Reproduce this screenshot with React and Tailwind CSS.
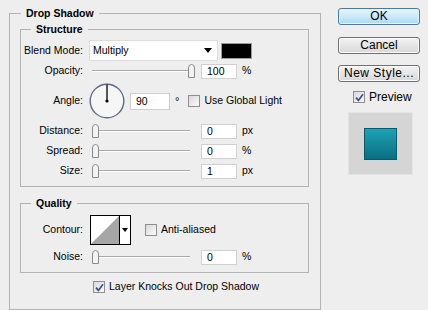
import React from "react";

const Check = ({ checked }) => (
  <div className="w-[12px] h-[12px] border border-[#8f8f8f] bg-gradient-to-br from-[#d9d9d9] to-[#fbfbfb] flex items-center justify-center shrink-0">
    {checked && (
      <svg width="9" height="9" viewBox="0 0 9 9">
        <path d="M1 4.6 L3.4 7.4 L8 1.2" stroke="#3b4e8e" strokeWidth="1.7" fill="none" />
      </svg>
    )}
  </div>
);

const Slider = ({ pos }) => (
  <div className="relative w-[104px] h-[16px] shrink-0">
    <div className="absolute left-[3px] right-[3px] top-[7px] h-[1px] bg-[#a8a8a8]" />
    <div className="absolute left-[3px] right-[3px] top-[8px] h-[1px] bg-white" />
    <svg className="absolute top-[1px]" style={{ left: pos }} width="7" height="14" viewBox="0 0 7 14">
      <path d="M0.5 13.5 V4 Q0.5 0.5 3.5 0.5 Q6.5 0.5 6.5 4 V13.5 Z" fill="#f3f3f3" stroke="#8b8b8b" />
    </svg>
  </div>
);

const Input = ({ value, w = "w-[36px]" }) => (
  <div className={`${w} h-[15px] bg-white border border-[#d0d0d0] pl-[5px] leading-[13px] shrink-0`}>{value}</div>
);

const Label = ({ children }) => <span className="w-[62px] text-right shrink-0">{children}</span>;

const SliderRow = ({ label, pos, value, unit }) => (
  <div className="flex items-center h-[20px]">
    <Label>{label}</Label>
    <div className="ml-[6px]">
      <Slider pos={pos} />
    </div>
    <div className="ml-[8px]">
      <Input value={value} />
    </div>
    <span className="ml-[5px]">{unit}</span>
  </div>
);

export default function App() {
  return (
    <div className="w-[428px] h-[310px] overflow-hidden bg-[#eeeeee] flex font-['Liberation_Sans',Arial,sans-serif] text-[10.5px] text-black">
      <fieldset className="ml-[9px] mt-[6px] w-[312px] border border-[#b3b3b3] pb-[20px] shrink-0">
        <legend className="ml-[11px] px-[5px] font-bold leading-[14px] h-[14px]">Drop Shadow</legend>

        <fieldset className="ml-[10px] mt-[2px] w-[289px] border border-[#b3b3b3] pt-[4px] pb-[5px]">
          <legend className="ml-[10px] px-[5px] font-bold leading-[14px] h-[14px]">Structure</legend>

          <div className="flex items-center h-[21px]">
            <Label>Blend Mode:</Label>
            <div className="ml-[6px] w-[129px] h-[21px] bg-white border border-[#dcdcdc] flex items-center pl-[3px] pr-[5px]">
              <span className="flex-1">Multiply</span>
              <svg width="8" height="5" viewBox="0 0 8 5">
                <path d="M0 0 H8 L4 5 Z" fill="#000" />
              </svg>
            </div>
            <div className="ml-[3px] w-[31px] h-[16px] bg-black border border-[#9a9a9a]" />
          </div>

          <SliderRow label="Opacity:" pos={99} value="100" unit="%" />

          <div className="flex items-center h-[40px]">
            <Label>Angle:</Label>
            <svg className="ml-[6px] shrink-0" width="36" height="36" viewBox="0 0 36 36">
              <circle cx="18" cy="18" r="16.8" fill="#f6f6f6" stroke="#5b6b86" strokeWidth="1.4" />
              <line x1="18" y1="18" x2="18" y2="1.5" stroke="#000" strokeWidth="1.3" />
              <circle cx="18" cy="18" r="1.6" fill="#000" />
            </svg>
            <div className="ml-[5px]">
              <div className="w-[40px] h-[17px] bg-white border border-[#d0d0d0] pl-[5px] leading-[15px]">90</div>
            </div>
            <span className="ml-[5px] text-[11px]">°</span>
            <div className="ml-[9px]">
              <Check />
            </div>
            <span className="ml-[4px]">Use Global Light</span>
          </div>

          <SliderRow label="Distance:" pos={3} value="0" unit="px" />
          <SliderRow label="Spread:" pos={3} value="0" unit="%" />
          <SliderRow label="Size:" pos={3} value="1" unit="px" />
        </fieldset>

        <fieldset className="ml-[10px] mt-[9px] w-[289px] border border-[#b3b3b3] pt-[5px] pb-[5px]">
          <legend className="ml-[10px] px-[5px] font-bold leading-[14px] h-[14px]">Quality</legend>

          <div className="flex items-center h-[30px]">
            <Label>Contour:</Label>
            <div className="ml-[7px] w-[41px] h-[30px] border border-black bg-white flex shrink-0">
              <svg width="28" height="28" viewBox="0 0 28 28" className="shrink-0">
                <path d="M0 28 L28 0 L28 28 Z" fill="#a6a6a6" />
              </svg>
              <div className="w-[1px] bg-black" />
              <div className="flex-1 flex items-center justify-center">
                <svg width="6" height="4" viewBox="0 0 6 4">
                  <path d="M0 0 H6 L3 4 Z" fill="#000" />
                </svg>
              </div>
            </div>
            <div className="ml-[14px]">
              <Check />
            </div>
            <span className="ml-[4px]">Anti-aliased</span>
          </div>

          <div className="mt-[2px]">
            <SliderRow label="Noise:" pos={3} value="0" unit="%" />
          </div>
        </fieldset>

        <div className="flex items-center h-[14px] mt-[7px] ml-[83px]">
          <Check checked />
          <span className="ml-[4px]">Layer Knocks Out Drop Shadow</span>
        </div>
      </fieldset>

      <div className="ml-[17px] mt-[8px] w-[82px] flex flex-col text-[12px] shrink-0">
        <button className="h-[17px] rounded-[3px] border border-[#3c7fb1] bg-gradient-to-b from-[#eaf6fd] to-[#a9dbf6] leading-[15px] shadow-[inset_0_0_0_1px_#dff2fc]">
          OK
        </button>
        <button className="mt-[12px] h-[17px] rounded-[3px] border border-[#707070] bg-gradient-to-b from-[#f3f3f3] to-[#d8d8d8] leading-[15px] shadow-[inset_0_0_0_1px_#fbfbfb]">
          Cancel
        </button>
        <button className="mt-[11px] h-[17px] rounded-[3px] border border-[#707070] bg-gradient-to-b from-[#f3f3f3] to-[#d8d8d8] leading-[15px] tracking-[0.5px] shadow-[inset_0_0_0_1px_#fbfbfb]">
          New Style...
        </button>
        <div className="mt-[8px] h-[14px] flex items-center ml-[15px]">
          <Check checked />
          <span className="ml-[4px]">Preview</span>
        </div>
        <div className="mt-[8px] ml-[10px] w-[65px] h-[63px] bg-[#d5d5d5] border border-[#e4e4e4] flex items-center justify-center">
          <div className="w-[33px] h-[32px] bg-gradient-to-b from-[#1ea2b6] to-[#0a6f84] border border-[#0b5866]" />
        </div>
      </div>
    </div>
  );
}
